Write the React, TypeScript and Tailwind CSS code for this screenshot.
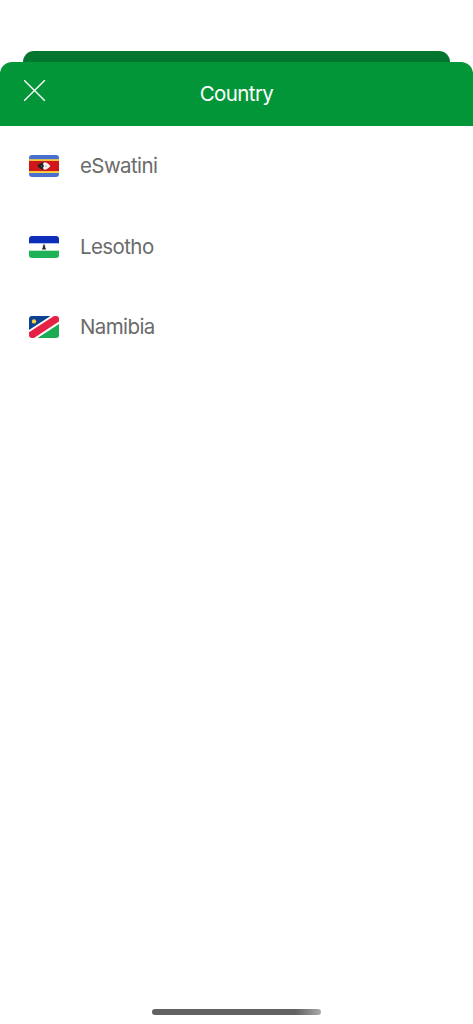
import React from 'react';

const EswatiniFlag = () => (
    <svg viewBox="0 0 30 22" className="w-[30px] h-[22px]">
        <rect width="30" height="22" fill="#4970cf" />
        <rect y="4.2" width="30" height="13.8" fill="#fbd540" />
        <rect y="5.9" width="30" height="10.2" fill="#d0151b" />
        <path d="M8.2 11Q11.5 7.3 15.2 7.3V14.7Q11.5 14.7 8.2 11Z" fill="#222" />
        <path d="M15 7.3Q18.8 7.5 21.4 11Q18.8 14.5 15 14.7L13.9 13L15 11L13.9 9Z" fill="#f4f4f4" />
        <path d="M12.6 10.4v1.4" stroke="#aaa" strokeWidth="0.7" />
        <path d="M17 10.4v1.4" stroke="#777" strokeWidth="0.7" />
    </svg>
);

const LesothoFlag = () => (
    <svg viewBox="0 0 30 22" className="w-[30px] h-[22px]">
        <rect width="30" height="22" fill="#fff" />
        <rect width="30" height="7.3" fill="#0d2eb8" />
        <rect y="14.7" width="30" height="7.3" fill="#1fb155" />
        <path d="M15 8.2L16.3 9.5L16 11L17.2 13.4H12.8L14 11L13.7 9.5Z" fill="#292929" />
        <circle cx="15" cy="9.2" r="0.9" fill="#888" />
    </svg>
);

const NamibiaFlag = () => (
    <svg viewBox="0 0 30 22" className="w-[30px] h-[22px]">
        <rect width="30" height="22" fill="#fff" />
        <path d="M0 0H21.5L0 14Z" fill="#0b4093" />
        <path d="M30 22H8.5L30 8Z" fill="#1caa54" />
        <path d="M0 16.2L25 0H30V5.6L5 22H0Z" fill="#e52246" />
        <circle cx="5" cy="5.4" r="2.2" fill="#f8cf3e" />
    </svg>
);

const countries = [
    { name: 'eSwatini', Flag: EswatiniFlag },
    { name: 'Lesotho', Flag: LesothoFlag },
    { name: 'Namibia', Flag: NamibiaFlag },
];

const CountryRow = ({ name, Flag }: { name: string; Flag: React.ComponentType }) => (
    <li className="flex h-[80.3px] items-center pl-[28.5px]">
        <span className="mr-[21.5px] overflow-hidden rounded-[3px]">
            <Flag />
        </span>
        <span className="text-[20.5px] leading-6 tracking-[-0.6px] text-[#6b6b6b]">{name}</span>
    </li>
);

export default function App() {
    return (
        <div className="flex h-screen flex-col overflow-hidden bg-white pt-[50.5px] font-['Inter',sans-serif]">
            {/* Edge of the sheet stacked behind this one */}
            <div className="mx-[23px] h-[11.5px] shrink-0 rounded-t-[11px] bg-[#02762e]" />

            <main className="flex flex-1 flex-col">
                <header className="grid h-16 grid-cols-[80px_1fr_80px] items-center rounded-t-[12px] bg-[#039639]">
                    <button aria-label="Close" className="mb-2 ml-[23px] size-[23px]">
                        <svg viewBox="0 0 23 23" className="size-[23px]" fill="none" stroke="#fff" strokeWidth="1.4">
                            <path d="M1.2 1.2L21.8 21.8M21.8 1.2L1.2 21.8" />
                        </svg>
                    </button>
                    <h1 className="text-center text-[20.5px] leading-6 tracking-[-0.6px] text-white">Country</h1>
                </header>

                <ul className="pt-[0.2px]">
                    {countries.map((country) => (
                        <CountryRow key={country.name} {...country} />
                    ))}
                </ul>
            </main>

            <div className="mx-auto mb-[9px] h-[6px] w-[169px] shrink-0 rounded-full bg-linear-to-r from-[#626262] from-85% to-[#aaa]" />
        </div>
    );
}
